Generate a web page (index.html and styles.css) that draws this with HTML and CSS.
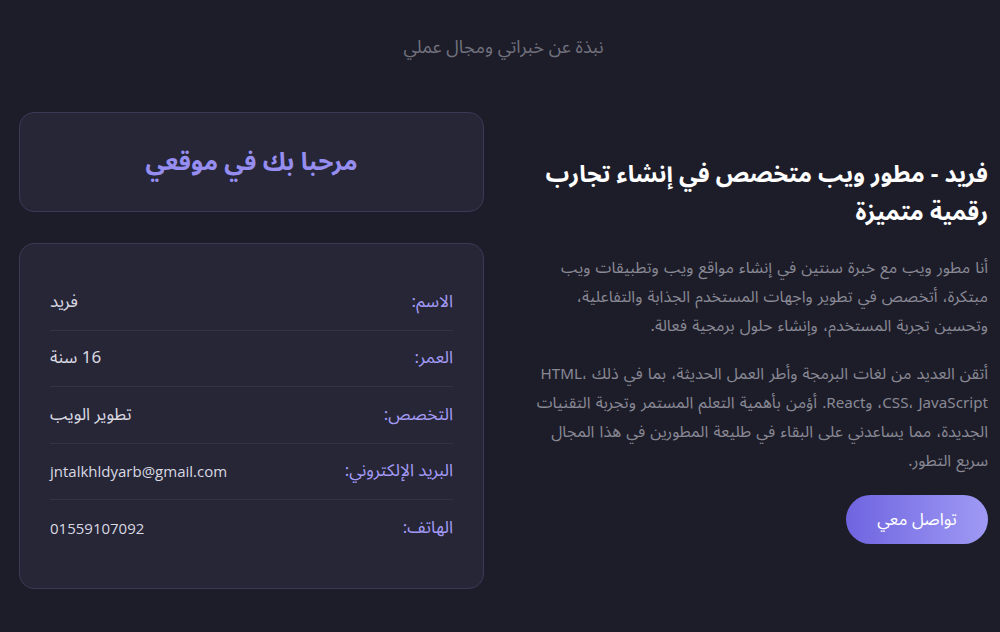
FILE: index.html
```html
<!DOCTYPE html>
<html lang="ar" dir="rtl">
<head>
<meta charset="utf-8">
<title>نبذة عني</title>
<link rel="stylesheet" href="styles.css">
</head>
<body>
<section class="about">
  <p class="subtitle">نبذة عن خبراتي ومجال عملي</p>
  <div class="grid">
    <div class="intro">
      <h2 class="intro-title">فريد - مطور ويب متخصص في إنشاء تجارب رقمية متميزة</h2>
      <p class="intro-text">أنا مطور ويب مع خبرة سنتين في إنشاء مواقع ويب وتطبيقات ويب مبتكرة، أتخصص في تطوير واجهات المستخدم الجذابة والتفاعلية، وتحسين تجربة المستخدم، وإنشاء حلول برمجية فعالة.</p>
      <p class="intro-text">أتقن العديد من لغات البرمجة وأطر العمل الحديثة، بما في ذلك <span class="tech">HTML،</span> <span class="tech">CSS، JavaScript، وReact.</span> أؤمن بأهمية التعلم المستمر وتجربة التقنيات الجديدة، مما يساعدني على البقاء في طليعة المطورين في هذا المجال سريع التطور.</p>
      <a class="btn" href="#">تواصل معي</a>
    </div>
    <div class="side">
      <div class="card welcome">
        <h3 class="welcome-title">مرحبا بك في موقعي</h3>
      </div>
      <div class="card info">
        <div class="row"><span class="label">الاسم:</span><span class="value">فريد</span></div>
        <div class="row"><span class="label">العمر:</span><span class="value">16 سنة</span></div>
        <div class="row"><span class="label">التخصص:</span><span class="value">تطوير الويب</span></div>
        <div class="row"><span class="label">البريد الإلكتروني:</span><span class="value latin">jntalkhldyarb@gmail.com</span></div>
        <div class="row"><span class="label">الهاتف:</span><span class="value latin">01559107092</span></div>
      </div>
    </div>
  </div>
</section>
</body>
</html>
```
FILE: styles.css
```css
* { box-sizing: border-box; }
html, body { margin: 0; padding: 0; }
body {
  background: #1d1d29;
  font-family: "Noto Sans Arabic", "Noto Kufi Arabic", "DejaVu Sans", "Open Sans", sans-serif;
  color: #e6e6ee;
  width: 1000px;
  height: 632px;
  overflow: hidden;
}
.about {
  padding: 33px 12px 0 19px;
}
.subtitle {
  margin: 0;
  text-align: center;
  color: #71717d;
  font-size: 18px;
  line-height: 28px;
}
.grid {
  display: grid;
  grid-template-columns: 1fr 1fr;
  column-gap: 39px;
  align-items: center;
  margin-top: 51px;
}
.intro {
  display: flex;
  flex-direction: column;
  align-items: flex-start;
}
.intro-title {
  margin: 0 0 22px;
  font-size: 23.5px;
  line-height: 38px;
  font-weight: 700;
  color: #ffffff;
}
.intro-text {
  margin: 0 0 19px;
  font-size: 16px;
  line-height: 29px;
  word-spacing: 1px;
  color: #898995;
}
.tech {
  font-size: 15.2px;
}
.btn {
  display: inline-flex;
  align-items: center;
  justify-content: center;
  width: 142px;
  height: 49px;
  border-radius: 25px;
  background: linear-gradient(90deg, #6f64e0 0%, #9f9af4 100%);
  color: #ffffff;
  text-decoration: none;
  font-size: 17px;
}
.side {
  display: flex;
  flex-direction: column;
  gap: 31px;
}
.card {
  background: #272636;
  border: 1px solid #3a3958;
  border-radius: 15px;
}
.welcome {
  height: 100px;
  display: flex;
  align-items: center;
  justify-content: center;
}
.welcome-title {
  margin: 0;
  font-size: 24.5px;
  font-weight: 700;
  color: #958df0;
}
.info {
  padding: 30px 30px 31px;
}
.row {
  display: flex;
  justify-content: space-between;
  align-items: center;
  height: 56.5px;
  border-bottom: 1px solid #343345;
}
.row:last-child { border-bottom: none; }
.label { color: #a39bf6; font-size: 17px; }
.value { color: #d9d9e2; font-size: 17px; }
.value.latin { font-family: "Open Sans", "Noto Sans Arabic", sans-serif; font-size: 15px; }
```
